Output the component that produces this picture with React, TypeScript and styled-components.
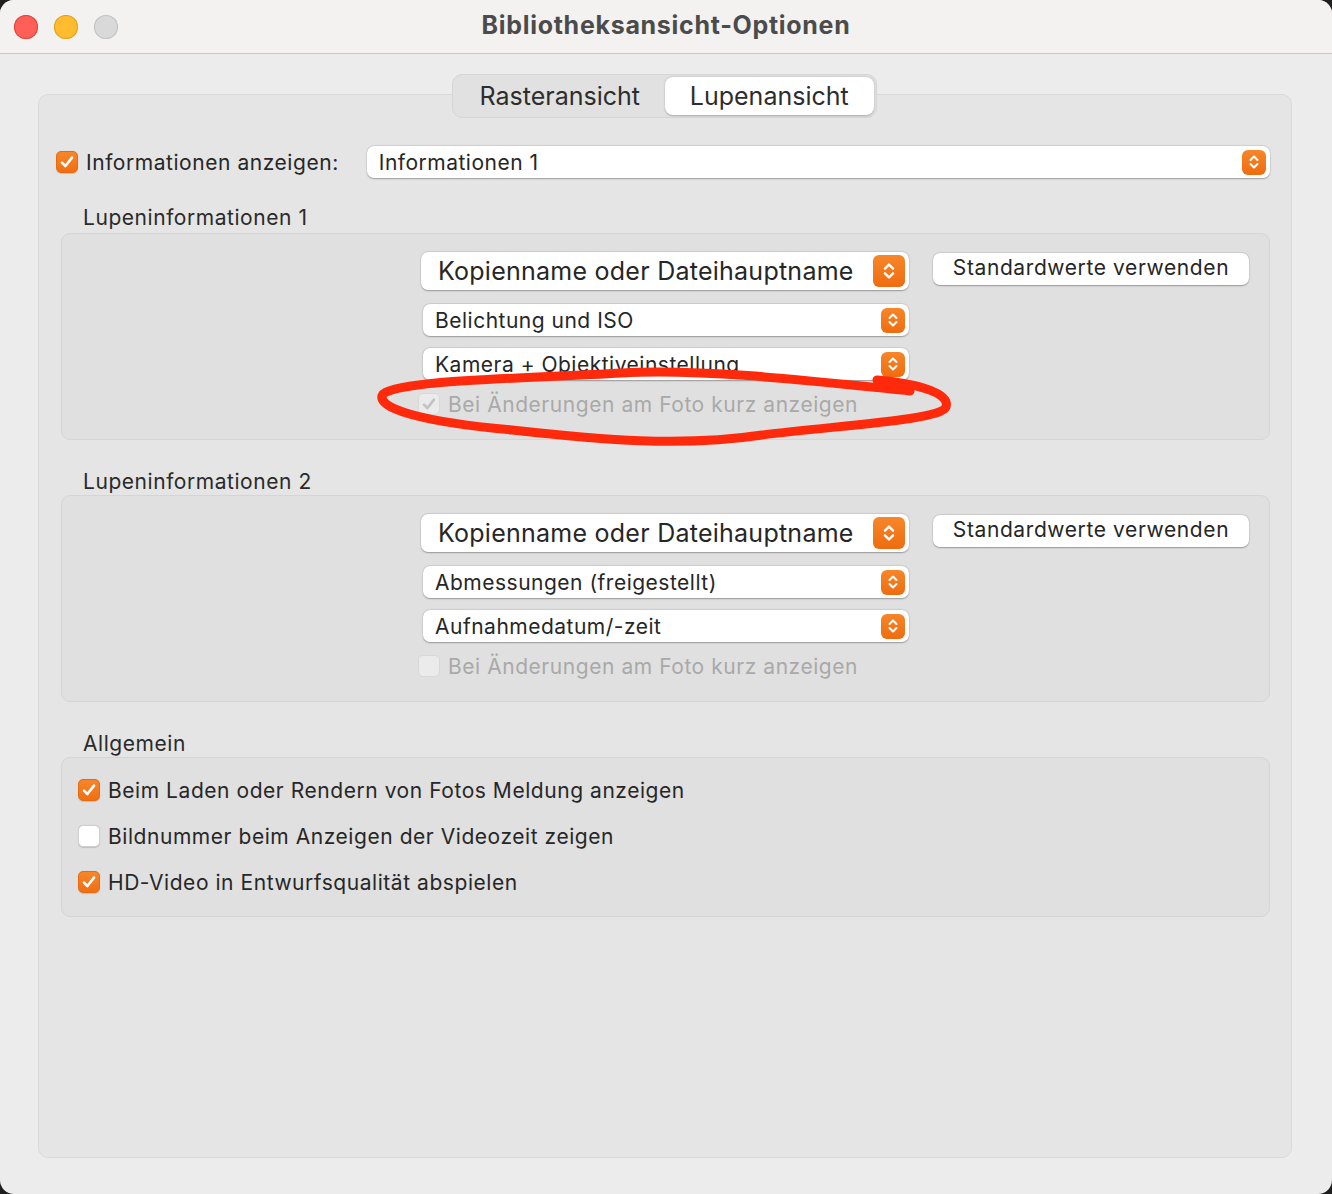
import styled, { createGlobalStyle } from 'styled-components';

const GlobalStyle = createGlobalStyle`
  html, body {
    margin: 0;
    padding: 0;
    background: #1f1f1f;
  }
  body {
    font-family: Inter, "Noto Sans", "Liberation Sans", sans-serif;
    color: #2a2a2a;
  }
`;

const Window = styled.div`
  width: 1332px;
  height: 1194px;
  background: #ececec;
  border-radius: 14px;
  overflow: hidden;
  display: flex;
  flex-direction: column;
`;

const TitleBar = styled.div`
  height: 53px;
  flex: none;
  background: #f3f2f0;
  border-bottom: 1px solid #c9c9c9;
  display: flex;
  align-items: center;
  position: relative;
`;

const Lights = styled.div`
  display: flex;
  gap: 16px;
  padding-left: 14px;
`;

const Light = styled.span<{ $c: string; $b: string }>`
  width: 24px;
  height: 24px;
  border-radius: 50%;
  background: ${(p) => p.$c};
  box-shadow: inset 0 0 0 1px ${(p) => p.$b};
`;

const Title = styled.div`
  position: absolute;
  left: 0;
  right: 0;
  top: 10px;
  text-align: center;
  font-size: 25px;
  font-weight: 700;
  color: #4b4b4b;
  letter-spacing: 0.7px;
`;

const Body = styled.div`
  flex: 1;
  padding: 20px 40px 36px 38px;
  display: flex;
  flex-direction: column;
`;

const TabBar = styled.div`
  align-self: flex-start;
  margin-left: 414px;
  margin-bottom: -24px;
  position: relative;
  z-index: 1;
  display: flex;
  padding: 2px;
  width: 425px;
  height: 44px;
  box-sizing: border-box;
  background: #e1e1e1;
  border: 1px solid #d6d6d6;
  border-radius: 10px;
`;

const Tab = styled.div<{ $active?: boolean }>`
  flex: 1;
  display: flex;
  align-items: center;
  justify-content: center;
  font-size: 25px;
  color: #2d2d2d;
  border-radius: 8px;
  background: ${(p) => (p.$active ? '#ffffff' : 'transparent')};
  box-shadow: ${(p) => (p.$active ? '0 0.5px 2px rgba(0,0,0,0.25)' : 'none')};
`;

const Panel = styled.div`
  flex: 1;
  background: #e5e5e5;
  border: 1px solid #d9d9d9;
  border-radius: 10px;
  padding: 51px 21px 0 17px;
`;

const TopRow = styled.div`
  display: flex;
  align-items: center;
  height: 32px;
`;

const Label = styled.span<{ $disabled?: boolean }>`
  font-size: 21px;
  color: ${(p) => (p.$disabled ? '#a9a9a9' : '#272727')};
  margin-left: 8px;
  white-space: nowrap;
  letter-spacing: 0.55px;
`;

const Check = styled.span<{ $on?: boolean; $disabled?: boolean }>`
  width: 22px;
  height: 22px;
  flex: none;
  box-sizing: border-box;
  border-radius: 5px;
  display: flex;
  align-items: center;
  justify-content: center;
  background: ${(p) =>
    p.$disabled ? '#ebebeb' : p.$on ? 'linear-gradient(#f7862a, #f06f12)' : '#ffffff'};
  border: ${(p) =>
    p.$disabled ? '1px solid #d8d8d8' : p.$on ? '1px solid #e66a10' : '1px solid #cfcfcf'};
  box-shadow: ${(p) => (p.$disabled ? 'none' : '0 0.5px 1px rgba(0,0,0,0.15)')};
`;

const Select = styled.div<{ $big?: boolean }>`
  height: ${(p) => (p.$big ? '38px' : '32px')};
  box-sizing: border-box;
  background: #ffffff;
  border-radius: 7px;
  box-shadow: 0 0.5px 1.5px rgba(0, 0, 0, 0.3), 0 0 0 0.5px rgba(0, 0, 0, 0.06);
  display: flex;
  align-items: center;
  padding: 0 4px 0 ${(p) => (p.$big ? '17px' : '12px')};
  font-size: ${(p) => (p.$big ? '25px' : '21px')};
  color: #262626;
  letter-spacing: ${(p) => (p.$big ? '0.25px' : '0.5px')};
`;

const SelectText = styled.span`
  flex: 1;
  white-space: nowrap;
`;

const InfoSelect = styled(Select)`
  flex: 1;
  margin-left: 28px;
  padding-right: 4px;
`;

const Stepper = styled.span<{ $big?: boolean }>`
  width: ${(p) => (p.$big ? '32px' : '24px')};
  height: ${(p) => (p.$big ? '32px' : '25px')};
  border-radius: 6px;
  background: linear-gradient(#f7862a, #ef6c10);
  display: flex;
  align-items: center;
  justify-content: center;
`;

const SectionLabel = styled.div`
  font-size: 21px;
  line-height: 24px;
  margin: 28px 0 3px 27px;
  letter-spacing: 0.55px;
`;

const SpacedLabel = styled(SectionLabel)`
  margin-top: 30px;
  margin-bottom: 1px;
`;

const Group = styled.div`
  position: relative;
  margin-left: 5px;
  background: #e0e0e0;
  border: 1px solid #d5d5d5;
  border-radius: 9px;
  padding: 18px 21px 23px 359px;
  display: grid;
  grid-template-columns: 488px 316px;
  column-gap: 24px;
  align-items: start;
`;

const Fields = styled.div`
  display: flex;
  flex-direction: column;
`;

const SmallSelect = styled(Select)`
  margin-left: 2px;
  margin-top: 14px;
`;

const NextSelect = styled(SmallSelect)`
  margin-top: 12px;
`;

const FieldCheck = styled.div`
  display: flex;
  align-items: center;
  height: 24px;
  margin-top: 12px;
  margin-left: -3px;
`;

const Button = styled.div`
  height: 32px;
  margin-top: 1px;
  background: #ffffff;
  border-radius: 7px;
  box-shadow: 0 0.5px 1.5px rgba(0, 0, 0, 0.3), 0 0 0 0.5px rgba(0, 0, 0, 0.06);
  display: flex;
  align-items: center;
  justify-content: center;
  font-size: 21px;
  color: #262626;
  letter-spacing: 0.6px;
  padding-bottom: 3px;
  box-sizing: border-box;
`;

const GeneralGroup = styled.div`
  margin-left: 5px;
  background: #e0e0e0;
  border: 1px solid #d5d5d5;
  border-radius: 9px;
  padding: 20px 16px 22px 16px;
  display: flex;
  flex-direction: column;
  gap: 22px;
`;

const CheckRow = styled.div`
  display: flex;
  align-items: center;
  height: 24px;
`;

const Scribble = styled.svg`
  position: absolute;
  left: 0;
  top: 0;
  width: 1210px;
  height: 230px;
  overflow: visible;
  pointer-events: none;
`;

const Tick = ({ color = '#ffffff' }: { color?: string }) => (
  <svg width="16" height="16" viewBox="0 0 16 16">
    <path d="M3 8.6 L6.4 12 L13 3.6" fill="none" stroke={color} strokeWidth="2.6" strokeLinecap="round" strokeLinejoin="round" />
  </svg>
);

const Arrows = ({ big }: { big?: boolean }) => (
  <svg width={big ? 14 : 12} height={big ? 22 : 18} viewBox="0 0 12 18">
    <path d="M2.5 7 L6 3.5 L9.5 7 M2.5 11 L6 14.5 L9.5 11" fill="none" stroke="#fff" strokeWidth="2" strokeLinecap="round" strokeLinejoin="round" />
  </svg>
);

type LupeProps = { first: string; second: string; third: string; checked?: boolean; mark?: boolean };

const LupeGroup = ({ first, second, third, checked, mark }: LupeProps) => (
  <Group>
    <Fields>
      <Select $big>
        <SelectText>{first}</SelectText>
        <Stepper $big>
          <Arrows big />
        </Stepper>
      </Select>
      <SmallSelect>
        <SelectText>{second}</SelectText>
        <Stepper>
          <Arrows />
        </Stepper>
      </SmallSelect>
      <NextSelect>
        <SelectText>{third}</SelectText>
        <Stepper>
          <Arrows />
        </Stepper>
      </NextSelect>
      <FieldCheck>
        <Check $disabled>{checked && <Tick color="#c2c2c2" />}</Check>
        <Label $disabled>Bei Änderungen am Foto kurz anzeigen</Label>
      </FieldCheck>
    </Fields>
    <Button>Standardwerte verwenden</Button>
    {mark && (
      <Scribble viewBox="0 0 1210 230">
        <path
          d="M848 157 C760 148 640 134 560 139 C450 145 340 146 321 160 C312 174 360 188 450 196 C540 206 620 213 700 201 C780 191 880 186 884 173 C888 160 860 150 815 146"
          fill="none"
          stroke="#ff2a0c"
          strokeWidth="9"
          strokeLinecap="round"
          strokeLinejoin="round"
        />
      </Scribble>
    )}
  </Group>
);

export default function App() {
  return (
    <>
      <GlobalStyle />
      <Window>
        <TitleBar>
          <Lights>
            <Light $c="#fe5f57" $b="#e0443e" />
            <Light $c="#febc2e" $b="#dea123" />
            <Light $c="#d9d9d9" $b="#c2c2c2" />
          </Lights>
          <Title>Bibliotheksansicht-Optionen</Title>
        </TitleBar>
        <Body>
          <TabBar>
            <Tab>Rasteransicht</Tab>
            <Tab $active>Lupenansicht</Tab>
          </TabBar>
          <Panel>
            <TopRow>
              <Check $on>
                <Tick />
              </Check>
              <Label>Informationen anzeigen:</Label>
              <InfoSelect>
                <SelectText>Informationen 1</SelectText>
                <Stepper>
                  <Arrows />
                </Stepper>
              </InfoSelect>
            </TopRow>
            <SectionLabel>Lupeninformationen 1</SectionLabel>
            <LupeGroup
              first="Kopienname oder Dateihauptname"
              second="Belichtung und ISO"
              third="Kamera + Objektiveinstellung"
              checked
              mark
            />
            <SpacedLabel>Lupeninformationen 2</SpacedLabel>
            <LupeGroup
              first="Kopienname oder Dateihauptname"
              second="Abmessungen (freigestellt)"
              third="Aufnahmedatum/-zeit"
            />
            <SpacedLabel>Allgemein</SpacedLabel>
            <GeneralGroup>
              <CheckRow>
                <Check $on>
                  <Tick />
                </Check>
                <Label>Beim Laden oder Rendern von Fotos Meldung anzeigen</Label>
              </CheckRow>
              <CheckRow>
                <Check />
                <Label>Bildnummer beim Anzeigen der Videozeit zeigen</Label>
              </CheckRow>
              <CheckRow>
                <Check $on>
                  <Tick />
                </Check>
                <Label>HD-Video in Entwurfsqualität abspielen</Label>
              </CheckRow>
            </GeneralGroup>
          </Panel>
        </Body>
      </Window>
    </>
  );
}
